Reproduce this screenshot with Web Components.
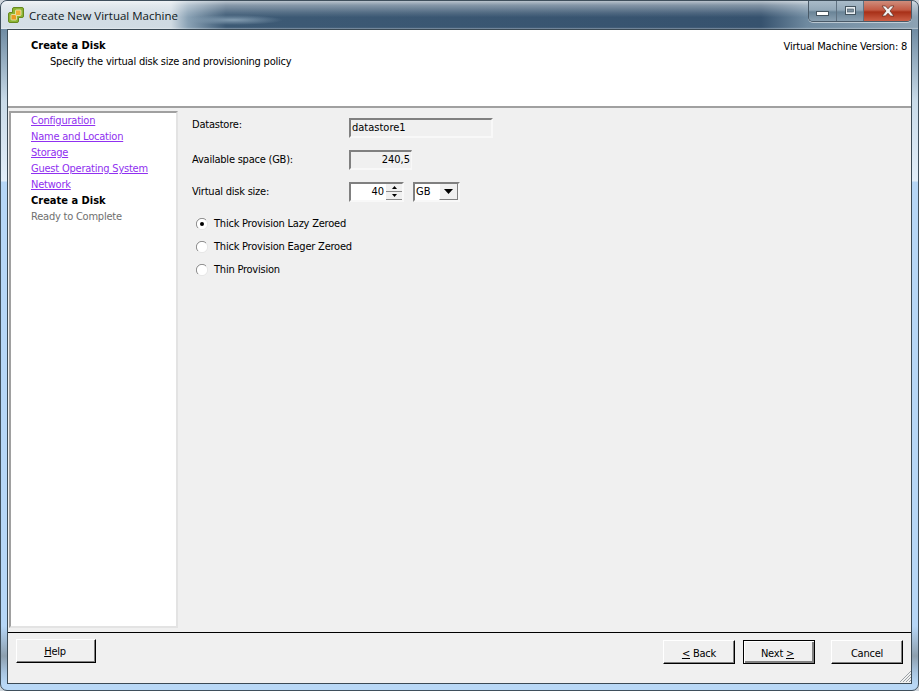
<!DOCTYPE html>
<html lang="en"><head><meta charset="utf-8"><title>Create New Virtual Machine</title>
<style>
html,body{margin:0;padding:0;height:100%;background:#cfd6dc;overflow:hidden}
body{font:11px "DejaVu Sans Condensed","DejaVu Sans",sans-serif;color:#000;letter-spacing:-.22px}
</style></head><body>
<vm-window caption="Create New Virtual Machine">
  <wizard-header slot="header" title-text="Create a Disk" sub="Specify the virtual disk size and provisioning policy" version="Virtual Machine Version: 8"></wizard-header>
  <wizard-nav slot="nav"></wizard-nav>
  <disk-form slot="main"></disk-form>
  <wizard-footer slot="footer"></wizard-footer>
</vm-window>
<script>
function el(name, css, html){
  customElements.define(name, class extends HTMLElement{
    connectedCallback(){
      if(this.shadowRoot) return;
      const r=this.attachShadow({mode:'open'});
      r.innerHTML='<style>'+css+'</style>'+(typeof html==='function'?html(this):html);
    }
  });
}
const esc=s=>String(s||'').replace(/&/g,'&amp;').replace(/</g,'&lt;');

el('vm-window',`
:host{display:flex;flex-direction:column;width:919px;height:691px;box-sizing:border-box;position:relative;
 border-radius:7px;overflow:hidden;border:1px solid #3f4f5c;
 background:linear-gradient(180deg,#5f7c93 0,#6f8ba2 28px,#c9dbe9 100px,#e2eef9 180px,#b6d6f6 181px,#b6d6f6 625px,#8d9fae 655px,#a9c6e2 672px,#b9d8f6 684px)}
.bar{height:28px;flex:none;display:flex;align-items:center;box-sizing:border-box;padding:0 0 0 6px;gap:4px;position:relative;
 background:
  linear-gradient(180deg,rgba(255,255,255,.65) 0,rgba(255,255,255,.38) 15%,rgba(255,255,255,.12) 42%,rgba(255,255,255,0) 58%,rgba(255,255,255,0) 94%,rgba(255,255,255,.4) 100%),
  radial-gradient(ellipse 50px 5px at 232px 19px,rgba(135,160,180,.95),rgba(135,160,180,0)),
  linear-gradient(90deg,#d6e0e7 0,#cfdae2 170px,#8aa2b5 187px,#3d5a75 225px,#36526e 760px,#6f8aa0 806px,#8da3b4 919px)}
.cap{font:11.5px "Open Sans","Noto Sans",sans-serif;color:#101820;white-space:nowrap;margin-top:1px;letter-spacing:0}
.btns{position:absolute;right:6px;top:0;display:flex;height:20px;border:1px solid #4a5a68;border-top:0;border-radius:0 0 5px 5px;overflow:hidden;box-shadow:0 1px 0 rgba(255,255,255,.5)}
.btns span{display:flex;align-items:center;justify-content:center;height:20px;border-right:1px solid #5f7181;
 background:linear-gradient(180deg,#a9bbc9 0,#93a8b8 45%,#6a8497 55%,#8aa0b1 100%)}
.min{width:27px}.min svg{margin-top:4px}.max{width:26px}.max svg{margin-bottom:2px}
.cls{width:47px;border-right:0!important;background:linear-gradient(180deg,#cf8d7c 0,#c25a44 45%,#a83018 55%,#cc5f46 100%)!important}
.cls svg{margin-bottom:1px}
.client{flex:1;margin:0 6px 6px 6px;border:1px solid #3b4a55;background:#f0f0f0;display:flex;flex-direction:column;min-height:0}
.mid{flex:1;display:flex;min-height:0;padding:3px 0 4px 1px;gap:0}
.foot{flex:none}
.grip{position:absolute;right:6px;bottom:7px;width:14px;height:14px}
`,h=>`
<div class="bar">
 <svg width="18" height="18" viewBox="0 0 18 18" aria-hidden="true">
  <path d="M7 1.500h8a1.500 1.500 0 0 1 1.500 1.500v7a1.500 1.500 0 0 1-1.500 1.500h-3.500V15a1.500 1.500 0 0 1-1.500 1.500H3A1.500 1.500 0 0 1 1.500 15V8A1.500 1.500 0 0 1 3 6.500h2.500V3A1.500 1.500 0 0 1 7 1.500z" fill="#8db431" stroke="#66891f"/>
  <rect x="4" y="8.500" width="5.500" height="5.500" rx=".8" fill="#e89a22" stroke="#e4eec0" stroke-width=".8"/>
  <rect x="8.500" y="4" width="5.500" height="5.500" rx=".8" fill="#f0ae34" stroke="#e4eec0" stroke-width=".8"/>
 </svg>
 <div class="cap">${esc(h.getAttribute('caption'))}</div>
 <div class="btns">
  <span class="min"><svg width="13" height="5"><rect x=".5" y=".5" width="12" height="4" fill="#fff" stroke="#44545f"/></svg></span>
  <span class="max"><svg width="11" height="9"><rect x=".5" y=".5" width="10" height="8" fill="#e8eef2" stroke="#44545f"/><rect x="2.500" y="3" width="6" height="3" fill="#7d909e" stroke="#44545f" stroke-width=".6"/></svg></span>
  <span class="cls"><svg width="16" height="12" viewBox="0 0 16 12"><path d="M2 1h3.500L8 3.800 10.500 1H14L10 6l4 5h-3.500L8 8.200 5.500 11H2l4-5z" fill="#f2f2f2" stroke="#5a2a20" stroke-width=".7"/></svg></span>
 </div>
</div>
<div class="client">
 <slot name="header"></slot>
 <div class="mid"><slot name="nav"></slot><slot name="main"></slot></div>
 <div class="foot"><slot name="footer"></slot></div>
</div>
<svg class="grip" viewBox="0 0 14 14"><path d="M13 2 2 13M13 5 5 13M13 8 8 13M13 11l-2 2" stroke="#9aa1a6" stroke-width="1"/></svg>
`);

el('wizard-header',`
:host{display:flex;flex:none;box-sizing:border-box;height:78px;background:#fff;border-bottom:2px solid #a0a0a0;position:relative;padding:9px 4px 0 23px;justify-content:space-between}
.t{font-weight:bold;color:#000;line-height:13px;letter-spacing:0}
.s{margin:3px 0 0 19px;line-height:13px}
.v{line-height:13px;margin-top:1px}
`,h=>`<div><div class="t">${esc(h.getAttribute('title-text'))}</div><div class="s">${esc(h.getAttribute('sub'))}</div></div><div class="v">${esc(h.getAttribute('version'))}</div>`);

el('wizard-nav',`
:host{display:block;flex:none;box-sizing:border-box;width:169px;height:100%;background:#fff;border:2px solid;border-color:#a0a0a0 #e3e3e3 #e3e3e3 #a0a0a0;padding:0 0 0 20px}
div{height:16px;line-height:16px;white-space:nowrap}
.d{color:#9030f0;text-decoration:underline}
.c{font-weight:bold;color:#000;letter-spacing:0}
.o{color:#6f6f6f}
`,`<div class="d">Configuration</div><div class="d">Name and Location</div><div class="d">Storage</div><div class="d">Guest Operating System</div><div class="d">Network</div><div class="c">Create a Disk</div><div class="o">Ready to Complete</div>`);

el('disk-form',`
:host{display:grid;flex:1;grid-template-columns:157px max-content;grid-auto-rows:max-content;align-content:start;padding:7px 0 0 14px;column-gap:0}
.l{line-height:13px}
.f{box-sizing:border-box;height:20px;border:2px solid;border-color:#808080 #f8f8f8 #f8f8f8 #808080;line-height:16px;padding:0 1px;letter-spacing:0}
.ds{width:144px;background:#f0f0f0}
.av{width:63px;text-align:right;border-right-width:1px;padding-right:1px}
.rowgap{margin-bottom:12px}
.sz{display:flex;align-items:flex-start;gap:9px}
.num{width:55px;background:#fff;display:flex;justify-content:flex-end;align-items:stretch;padding:0}
.num b{font-weight:normal;padding-right:2px}
.spin{width:16px;display:flex;flex-direction:column;background:#efefef}
.spin i{flex:1;display:flex;align-items:center;justify-content:center;border:1px solid #8a8a8a;border-width:0 0 1px 0;background:#f0f0f0}
.sel{width:47px;background:#fff;display:flex;justify-content:space-between;padding:0}
.sel span{padding-left:1px}
.sel i{width:17px;background:#f0f0f0;border-left:1px solid #fff;border-right:1px solid #808080;border-bottom:1px solid #808080;display:flex;align-items:center;justify-content:center}
.radios{grid-column:1/3;display:flex;flex-direction:column;gap:10px;margin:15px 0 0 4px}
.r{display:flex;align-items:center;gap:6px;line-height:13px}
.r svg{flex:none}
`,()=>{
 const radio=on=>`<svg width="12" height="12" viewBox="0 0 12 12"><circle cx="6" cy="6" r="5.500" fill="#fff"/><path d="M10 2A5.500 5.500 0 0 0 2 10" fill="none" stroke="#8b8b8b"/><path d="M2 10A5.500 5.500 0 0 0 10 2" fill="none" stroke="#e6e6e6"/>${on?'<circle cx="6" cy="6" r="2" fill="#000"/>':''}</svg>`;
 return `
 <div class="l">Datastore:</div><div class="f ds rowgap">datastore1</div>
 <div class="l" style="padding-top:3px">Available space (GB):</div><div class="f av rowgap">240,5</div>
 <div class="l" style="padding-top:3px">Virtual disk size:</div>
 <div class="sz"><div class="f num"><b>40</b><span class="spin"><i><svg width="5" height="3"><path d="M2.500 0 5 3H0z"/></svg></i><i><svg width="5" height="3"><path d="M0 0h5L2.500 3z"/></svg></i></span></div>
 <div class="f sel"><span>GB</span><i><svg width="9" height="5"><path d="M0 0h9L4.500 5z"/></svg></i></div></div>
 <div class="radios">
  <div class="r">${radio(1)}<span>Thick Provision Lazy Zeroed</span></div>
  <div class="r">${radio(0)}<span>Thick Provision Eager Zeroed</span></div>
  <div class="r">${radio(0)}<span>Thin Provision</span></div>
 </div>`;
});

el('wiz-button',`
:host{display:flex;align-items:center;justify-content:center;box-sizing:border-box;height:24px;background:#f0f0f0;border:1px solid;border-color:#fff #000 #000 #fff;box-shadow:inset -1px -1px 0 #808080;white-space:nowrap}
:host([default]){border-color:#000;box-shadow:inset 1px 1px 0 #fff,inset -2px -2px 0 #808080}
`,`<slot></slot>`);

el('wizard-footer',`
:host{display:flex;box-sizing:border-box;height:51px;border-top:1px solid #000;padding:6px 8px 0 8px;align-items:flex-start;background:#f0f0f0}
.sp{flex:1}
`,`<wiz-button style="width:80px;padding-right:2px"><u>H</u>elp</wiz-button><div class="sp"></div>
<wiz-button style="width:72px;margin-top:1px;padding-top:2px"><u>&lt;</u>&nbsp;Back</wiz-button>
<wiz-button default style="width:72px;margin:1px 0 0 8px;padding:2px 3px 0 0">Next&nbsp;<u>&gt;</u></wiz-button>
<wiz-button style="width:72px;margin:1px 0 0 16px;padding-top:2px">Cancel</wiz-button>`);
</script>
</body></html>
